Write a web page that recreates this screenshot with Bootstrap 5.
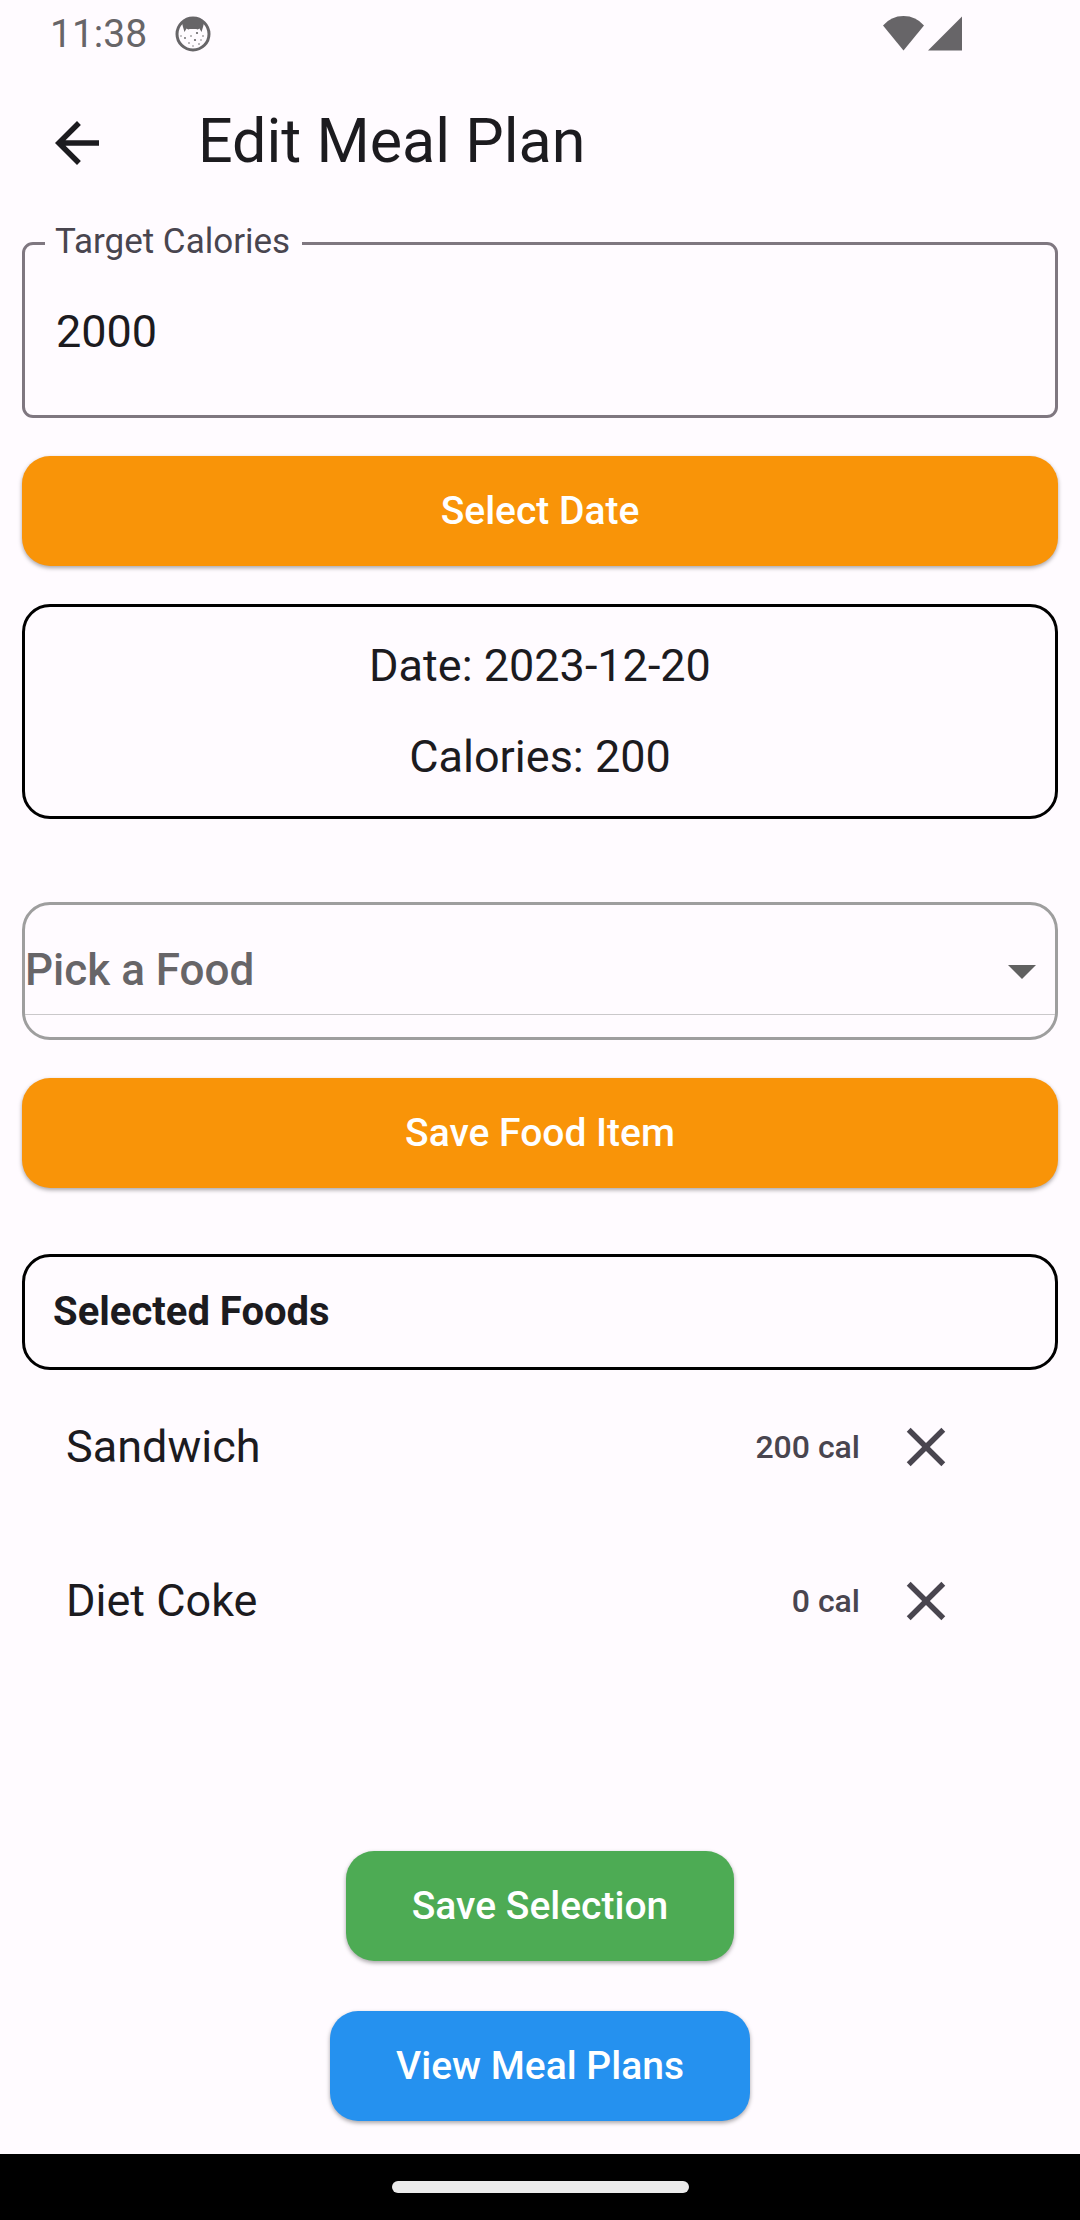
<!DOCTYPE html>
<html lang="en">
<head>
<meta charset="utf-8">
<meta name="viewport" content="width=device-width, initial-scale=1">
<title>Edit Meal Plan</title>
<link href="https://cdn.jsdelivr.net/npm/bootstrap@5.3.0/dist/css/bootstrap.min.css" rel="stylesheet">
<style>
  :root { --ink: #1c1b1f; --ink-soft: #49454f; --surface: #fffbff; --edge: 22px; --round: 28px; }
  body { font-family: Roboto, "Noto Sans", sans-serif; background: var(--surface); color: var(--ink); font-size: 45px; line-height: 52px; }
  svg { display: block; flex: none; }

  .status-bar { height: 66px; padding: 2px 118px 0 50px; color: #676568; font-size: 39px; line-height: 46px; }
  .status-bar .signals { gap: 4px; padding-bottom: 2px; }
  .app-bar { height: 154px; padding: 0 var(--edge); gap: 66px; }
  .app-bar h1 { padding-bottom: 4px; font-size: 61px; line-height: 76px; font-weight: 400; }
  .icon-btn { width: 110px; height: 110px; padding: 0; color: var(--ink); display: flex; align-items: center; justify-content: center; }
  .page-body { padding: var(--edge) var(--edge) 33px; }

  .outlined label { top: -20px; left: 23px; padding: 0 12px 0 10px; background: var(--surface); color: var(--ink-soft); font-size: 35px; line-height: 40px; }
  .outlined .form-control { height: 176px; padding: 2px 31px 0; border: 3px solid #7f7780; border-radius: 11px; background: transparent; color: var(--ink); font-size: 45px; }

  .btn-fill { height: 110px; padding: 0 66px; border: 0; border-radius: var(--round); color: #fff; font-size: 39px; line-height: 46px; font-weight: 500; box-shadow: 0 2px 4px rgba(0, 0, 0, .35); }
  .btn-fill:hover { color: #fff; filter: brightness(.95); }
  .tone-orange, .tone-orange:hover { background: #f99408; }
  .tone-green, .tone-green:hover { background: #4dab54; }
  .tone-blue, .tone-blue:hover { background: #2591ef; }

  .stack { gap: 38px; }
  .panel { border: 3px solid #000; border-radius: var(--round); }
  .summary { padding: 33px 0; gap: 39px; }
  .picker { margin-top: 45px; padding-bottom: 22px; border: 3px solid #9e9e9e; border-radius: var(--round); }
  .picker .form-select { height: 110px; padding: 20px 66px 0 0; border: 0; border-bottom: 1px solid #cac8ca; border-radius: 0; background-color: transparent; color: #676568; font-size: 44px; font-weight: 500; line-height: 52px;
    background-image: url("data:image/svg+xml,%3Csvg xmlns='http://www.w3.org/2000/svg' viewBox='0 0 28 14'%3E%3Cpath fill='%23616161' d='M0 0h28L14 14z'/%3E%3C/svg%3E"); background-size: 28px 14px; background-position: right 19px top 60px; }
  .section-head { margin-top: 28px; padding: 31px 28px; }
  .section-head h2 { font-size: 40px; line-height: 48px; font-weight: 700; }
  .food-row { height: 154px; padding: 0 66px 0 44px; background: transparent; border: 0; color: var(--ink); }
  .food-row .kcal { color: var(--ink-soft); font-size: 32px; line-height: 44px; font-weight: 500; }
  .food-row .icon-btn { width: 132px; color: var(--ink-soft); }
  .actions { gap: 50px; }

  .nav-strip { height: 66px; background: #000; }
  .nav-pill { width: 27.5%; height: 12px; border-radius: 6px; background: #ebebeb; }
</style>
</head>
<body class="d-flex flex-column min-vh-100">

<div class="status-bar d-flex align-items-center justify-content-between">
  <div class="d-flex align-items-center gap-4">
    <span>11:38</span>
    <svg class="ms-1" width="36" height="36" viewBox="0 0 36 36" aria-hidden="true">
      <circle cx="18" cy="18" r="16" fill="none" stroke="#676568" stroke-width="3"/>
      <path fill="#676568" d="M7 7Q18-4 29 7L28 11 26.500 16 24.500 12.500Q22 14 21.500 13H14.500Q14 14 11.500 12.500L9.500 16 8 11Z"/>
      <g fill="#676568"><circle cx="10" cy="22" r=".9"/><circle cx="16" cy="20" r=".8"/><circle cx="22" cy="17" r="1.1"/><circle cx="28" cy="20" r=".8"/><circle cx="14" cy="27" r=".8"/><circle cx="20" cy="24" r="1.1"/><circle cx="24" cy="28" r=".8"/><circle cx="6" cy="20" r=".7"/><circle cx="18" cy="30" r=".7"/><circle cx="26" cy="24" r=".7"/></g>
    </svg>
  </div>
  <div class="signals d-flex align-items-center">
    <svg width="41" height="35" viewBox="0 0 41 35" aria-hidden="true"><path fill="#676568" d="M0 9.500Q8 0 20.500 0T41 9.500L20.500 34.500z"/></svg>
    <svg width="34" height="35" viewBox="0 0 34 35" aria-hidden="true"><path fill="#676568" d="M34 .5V34.500H0z"/></svg>
  </div>
</div>

<header class="app-bar d-flex align-items-center">
  <button type="button" class="btn icon-btn" aria-label="Back">
    <svg width="66" height="66" viewBox="0 0 24 24" fill="currentColor" aria-hidden="true"><path d="M20 11H7.830l5.590-5.590L12 4l-8 8 8 8 1.410-1.410L7.830 13H20v-2z"/></svg>
  </button>
  <h1 class="m-0">Edit Meal Plan</h1>
</header>

<main class="page-body d-flex flex-column flex-grow-1">
  <form class="stack d-flex flex-column">
    <div class="outlined position-relative">
      <input type="text" inputmode="numeric" class="form-control" id="target" value="2000">
      <label for="target" class="position-absolute">Target Calories</label>
    </div>
    <button type="button" class="btn btn-fill tone-orange w-100">Select Date</button>
    <div class="panel summary d-flex flex-column text-center">
      <div>Date: 2023-12-20</div>
      <div>Calories: 200</div>
    </div>
    <div class="picker">
      <select class="form-select" aria-label="Pick a Food">
        <option>Pick a Food</option>
      </select>
    </div>
    <button type="button" class="btn btn-fill tone-orange w-100">Save Food Item</button>
    <div class="panel section-head"><h2 class="m-0">Selected Foods</h2></div>
  </form>

  <ul class="list-group list-group-flush">
    <li class="list-group-item food-row d-flex align-items-center">
      <span class="flex-grow-1">Sandwich</span>
      <span class="kcal">200 cal</span>
      <button type="button" class="btn icon-btn" aria-label="Remove Sandwich"><svg width="66" height="66" viewBox="0 0 24 24" fill="currentColor" aria-hidden="true"><path d="M19 6.410L17.590 5 12 10.590 6.410 5 5 6.410 10.590 12 5 17.590 6.410 19 12 13.410 17.590 19 19 17.590 13.410 12z"/></svg></button>
    </li>
    <li class="list-group-item food-row d-flex align-items-center">
      <span class="flex-grow-1">Diet Coke</span>
      <span class="kcal">0 cal</span>
      <button type="button" class="btn icon-btn" aria-label="Remove Diet Coke"><svg width="66" height="66" viewBox="0 0 24 24" fill="currentColor" aria-hidden="true"><path d="M19 6.410L17.590 5 12 10.590 6.410 5 5 6.410 10.590 12 5 17.590 6.410 19 12 13.410 17.590 19 19 17.590 13.410 12z"/></svg></button>
    </li>
  </ul>

  <div class="actions d-flex flex-column align-items-center mt-auto">
    <button type="button" class="btn btn-fill tone-green">Save Selection</button>
    <button type="button" class="btn btn-fill tone-blue">View Meal Plans</button>
  </div>
</main>

<div class="nav-strip d-flex align-items-center justify-content-center"><div class="nav-pill"></div></div>

<script src="https://cdn.jsdelivr.net/npm/bootstrap@5.3.0/dist/js/bootstrap.bundle.min.js"></script>
</body>
</html>
